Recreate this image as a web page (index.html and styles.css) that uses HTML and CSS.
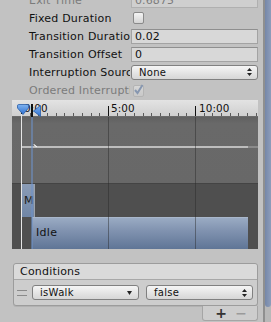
FILE: index.html
```html
<!DOCTYPE html>
<html>
<head>
<meta charset="utf-8">
<link rel="stylesheet" href="styles.css">
</head>
<body>
<div class="window">
  <div class="main">
    <div class="inspector">
      <div class="row disabled">
        <div class="label">Exit Time</div>
        <div class="field">0.6875</div>
      </div>
      <div class="row">
        <div class="label">Fixed Duration</div>
        <span class="checkbox"></span>
      </div>
      <div class="row">
        <div class="label">Transition Duration (s)</div>
        <div class="field">0.02</div>
      </div>
      <div class="row">
        <div class="label">Transition Offset</div>
        <div class="field">0</div>
      </div>
      <div class="row">
        <div class="label">Interruption Source</div>
        <div class="popup"><span>None</span>
          <svg class="updown" width="5" height="8" viewBox="0 0 5 8"><path d="M2.5 0 L5 3 L0 3 Z M0 5 L5 5 L2.5 8 Z" fill="#222"/></svg>
        </div>
      </div>
      <div class="row disabled">
        <div class="label">Ordered Interruption</div>
        <span class="checkbox checked">
          <svg width="11" height="12" viewBox="0 0 11 12"><path d="M2 6 L4.5 9 L9.5 1" fill="none" stroke="#8797b0" stroke-width="2"/></svg>
        </span>
      </div>
    </div>

    <div class="timeline">
      <div class="ruler">
        <span class="tick-label t0">0:00</span>
        <span class="tick-label t5">5:00</span>
        <span class="tick-label t10">10:00</span>
        <span class="major m0"></span>
        <span class="major m5"></span>
        <span class="major m10"></span>
      </div>
      <div class="curve-area">
        <div class="curve"></div>
        <div class="cursor-mark"></div>
      </div>
      <div class="blocks">
        <div class="m-row"><div class="m-block">M</div></div>
        <div class="idle-row"><div class="idle-block">Idle</div></div>
      </div>
      <div class="grid g5"></div>
      <div class="grid g10"></div>
      <div class="white-line"></div>
      <div class="blue-line"></div>
      <div class="black-line"></div>
      <svg class="marker-start" width="12" height="11" viewBox="0 0 12 11">
        <defs><linearGradient id="bl" x1="0" y1="0" x2="0" y2="1"><stop offset="0" stop-color="#7fb3f0"/><stop offset="1" stop-color="#2d6fd0"/></linearGradient></defs>
        <path d="M1.5 0.5 H10.5 Q11.5 0.5 11.5 2 V4 L6 10.5 L0.5 4 V2 Q0.5 0.5 1.5 0.5 Z" fill="url(#bl)" stroke="#2a5ea8" stroke-width="0.8"/>
      </svg>
      <svg class="marker-end" width="8" height="12" viewBox="0 0 8 12">
        <defs><linearGradient id="bl2" x1="0" y1="0" x2="0" y2="1"><stop offset="0" stop-color="#7fb3f0"/><stop offset="1" stop-color="#2d6fd0"/></linearGradient></defs>
        <path d="M7.5 0.5 V11.5 L0.5 6 Z" fill="url(#bl2)" stroke="#2a5ea8" stroke-width="0.8"/>
      </svg>
    </div>

    <div class="conditions">
      <div class="cond-box">
        <div class="cond-header">Conditions</div>
        <div class="cond-row">
          <span class="handle"></span>
          <div class="popup small param"><span>isWalk</span>
            <svg class="down" width="5" height="4" viewBox="0 0 5 4"><path d="M0 0 L5 0 L2.5 4 Z" fill="#222"/></svg>
          </div>
          <div class="popup small value"><span>false</span>
            <svg class="updown" width="5" height="8" viewBox="0 0 5 8"><path d="M2.5 0 L5 3 L0 3 Z M0 5 L5 5 L2.5 8 Z" fill="#222"/></svg>
          </div>
        </div>
      </div>
      <div class="cond-footer">
        <span class="plus">+</span>
        <span class="minus">−</span>
      </div>
    </div>
  </div>
  <div class="scrollbar"><div class="thumb"></div></div>
</div>
</body>
</html>
```
FILE: styles.css
```css
html, body {
  margin: 0;
  padding: 0;
  background: #c2c2c2;
  overflow: hidden;
}
body {
  font-family: "DejaVu Sans", "Liberation Sans", sans-serif;
  font-size: 11px;
  color: #111;
}
.window {
  display: flex;
  width: 271px;
  height: 322px;
  overflow: hidden;
}
.main {
  width: 263px;
  flex: none;
}
.inspector {
  margin-top: -9px;
}
.row {
  display: flex;
  align-items: center;
  height: 18px;
}
.label {
  width: 101px;
  padding-left: 29px;
  flex: none;
  white-space: nowrap;
  overflow: hidden;
  letter-spacing: 0.2px;
  line-height: 17px;
  margin-right: 1px;
}
.row.disabled .label {
  color: #7b7b7b;
}
.field {
  width: 127px;
  height: 15px;
  box-sizing: border-box;
  border: 1px solid #a3a3a3;
  border-top-color: #8f8f8f;
  background: #d8d8d8;
  padding-left: 3px;
  line-height: 13px;
  letter-spacing: 0.1px;
}
.row.disabled .field {
  color: #7b7b7b;
  background: #cfcfcf;
  border-color: #b0b0b0;
}
.checkbox {
  width: 11px;
  height: 12px;
  box-sizing: border-box;
  margin-left: 2px;
  border: 1px solid #8a8a8a;
  border-radius: 2px;
  background: linear-gradient(#f4f4f4, #d4d4d4);
  display: flex;
  align-items: center;
  justify-content: center;
}
.checkbox.checked {
  border: 1px solid #b4b4b4;
  background: linear-gradient(#d6d6d6, #c8c8c8);
  margin-top: 1px;
  overflow: visible;
}
.checkbox.checked svg {
  flex: none;
  margin-top: -1px;
}
.popup {
  width: 127px;
  height: 15px;
  box-sizing: border-box;
  border: 1px solid #808080;
  border-radius: 3px;
  background: linear-gradient(#f5f5f5, #d6d6d6);
  display: flex;
  align-items: center;
  justify-content: space-between;
  padding: 0 5px 0 7px;
  font-size: 10px;
  letter-spacing: 0.3px;
}
.popup span {
  line-height: 13px;
}

/* Timeline */
.timeline {
  position: relative;
  margin: 1px 5px 0 12px;
  width: 246px;
  background: #4e4e4e;
}
.ruler {
  position: relative;
  height: 17px;
  box-sizing: border-box;
  border-bottom: 1px solid #6a6a6a;
  background:
    repeating-linear-gradient(90deg, #5a5a5a 0, #5a5a5a 1px, transparent 1px, transparent 8.7px) 9px 13px / 100% 3px no-repeat,
    linear-gradient(#e3e3e3, #cfcfcf);
}
.tick-label {
  position: absolute;
  top: 3px;
  font-size: 10.4px;
  line-height: 11px;
  color: #111;
  letter-spacing: 0.1px;
}
.t0 { left: 12px; }
.t5 { left: 99px; }
.t10 { left: 187px; }
.major {
  position: absolute;
  bottom: 0;
  width: 1px;
  height: 10px;
  background: #111;
}
.m0 { left: 9px; }
.m5 { left: 96px; }
.m10 { left: 183px; }
.curve-area {
  position: relative;
  height: 67px;
  background: linear-gradient(#606060, #696969 10%, #686868);
  border-bottom: 1px solid #444;
  box-sizing: border-box;
}
.curve {
  position: absolute;
  left: 9px;
  top: 29px;
  width: 227px;
  height: 2px;
  background: #bdbdbd;
}
.curve::after {
  content: "";
  position: absolute;
  left: 227px;
  top: 0;
  width: 10px;
  height: 2px;
  background: #8a8a8a;
}
.cursor-mark {
  position: absolute;
  left: 22px;
  top: 27px;
  width: 4px;
  height: 1px;
  background: #fff;
  transform: rotate(40deg);
  transform-origin: 0 0;
}
.blocks {
  background: #4f4f4f;
}
.m-row {
  height: 33px;
  padding-left: 10px;
}
.m-block {
  width: 13px;
  height: 33px;
  box-sizing: border-box;
  background: linear-gradient(#8b9cb6, #7086a6);
  border-right: 1px solid #9da3ab;
  font-size: 11px;
  line-height: 12px;
  padding-top: 11px;
  padding-left: 2px;
  color: #1a1a1a;
  overflow: visible;
  white-space: nowrap;
}
.idle-row {
  height: 32px;
  padding-left: 20px;
}
.idle-block {
  width: 216px;
  height: 32px;
  box-sizing: border-box;
  background: linear-gradient(#9aabc3, #8193b0 40%, #5f7596);
  border-top: 1px solid #a9b7cb;
  padding-left: 4px;
  line-height: 30px;
  font-size: 11px;
  letter-spacing: 0.3px;
  color: #111;
}
.grid {
  position: absolute;
  top: 17px;
  bottom: 0;
  width: 1px;
  background: rgba(40, 40, 40, 0.45);
}
.g5 { left: 96px; }
.g10 { left: 183px; }
.white-line {
  position: absolute;
  left: 9px;
  top: 14px;
  bottom: 0;
  width: 1px;
  background: #e6e6e6;
}
.blue-line {
  position: absolute;
  left: 19px;
  top: 16px;
  bottom: 0;
  width: 2px;
  background: rgba(110, 145, 200, 0.55);
}
.black-line {
  position: absolute;
  left: 19px;
  top: 4px;
  height: 13px;
  width: 2px;
  background: #111;
}
.marker-start {
  position: absolute;
  left: 5px;
  top: 4px;
}
.marker-end {
  position: absolute;
  left: 21px;
  top: 5px;
}

/* Conditions */
.conditions {
  margin: 14px 5px 0 13px;
}
.cond-box {
  border: 1px solid #9c9c9c;
  border-radius: 3px;
  background: #cdcdcd;
  box-shadow: 0 1px 0 rgba(0,0,0,0.08);
}
.cond-header {
  height: 15px;
  background: #dadada;
  border-bottom: 1px solid #a8a8a8;
  border-radius: 3px 3px 0 0;
  padding-left: 6px;
  line-height: 15px;
  letter-spacing: 0.2px;
}
.cond-row {
  display: flex;
  align-items: center;
  height: 25px;
  padding-left: 3px;
}
.handle {
  width: 10px;
  height: 4px;
  border-top: 1px solid #8a8a8a;
  border-bottom: 1px solid #8a8a8a;
  margin-right: 5px;
  margin-top: 1px;
}
.popup.small {
  height: 15px;
}
.param {
  width: 107px;
  padding-right: 6px;
}
.value {
  width: 107px;
  margin-left: 7px;
}
.cond-footer {
  margin-left: 189px;
  width: 56px;
  height: 15px;
  box-sizing: border-box;
  border: 1px solid #a5a5a5;
  border-top: none;
  border-radius: 0 0 3px 3px;
  background: #cdcdcd;
  display: flex;
  align-items: center;
  justify-content: space-around;
  padding: 0 6px 0 8px;
}
.plus {
  font-size: 14px;
  font-weight: bold;
  color: #333;
  line-height: 14px;
}
.minus {
  font-size: 14px;
  font-weight: bold;
  color: #9a9a9a;
  line-height: 14px;
}

/* Scrollbar */
.scrollbar {
  width: 8px;
  flex: none;
  border-left: 2px solid #8f8f8f;
  box-sizing: border-box;
  background: #b8b8b8;
}
.thumb {
  height: 307px;
  background: linear-gradient(90deg, #7587a9, #8d9dba);
  border-radius: 0 0 3px 3px;
}
```
